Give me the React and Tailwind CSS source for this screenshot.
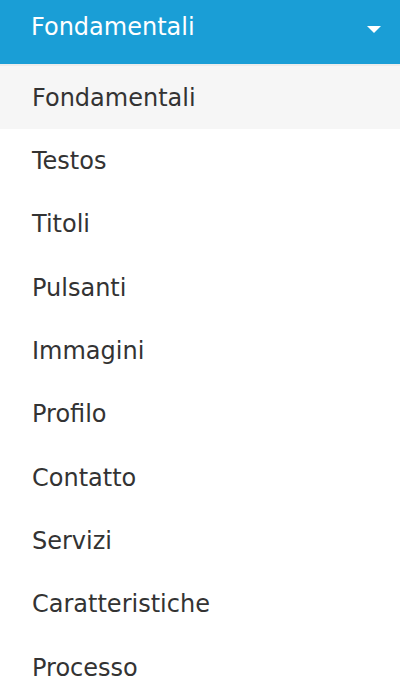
import React from "react";

const items = [
  "Fondamentali",
  "Testos",
  "Titoli",
  "Pulsanti",
  "Immagini",
  "Profilo",
  "Contatto",
  "Servizi",
  "Caratteristiche",
  "Processo",
];

export default function App() {
  return (
    <div
      className="w-[400px] h-[688px] overflow-hidden bg-white"
      style={{ fontFamily: '"DejaVu Sans", Verdana, sans-serif' }}
    >
      <div className="h-[64px] bg-[#1a9ed6] flex items-start justify-between pl-[31px] pr-[19px]">
        <span className="text-white text-[24px] leading-none mt-[15px]">Fondamentali</span>
        <svg width="14" height="7" viewBox="0 0 14 7" className="mt-[26px]">
          <polygon points="0,0 14,0 7,7" fill="#ffffff" />
        </svg>
      </div>
      <div className="h-[2px] bg-[#ececec]" />
      <ul>
        {items.map((it, i) => (
          <li
            key={it}
            className={
              "h-[63.33px] flex items-center pl-[32px] text-[24px] text-[#333333] " +
              (i === 0 ? "bg-[#f6f6f6]" : "bg-white")
            }
          >
            {it}
          </li>
        ))}
      </ul>
    </div>
  );
}
